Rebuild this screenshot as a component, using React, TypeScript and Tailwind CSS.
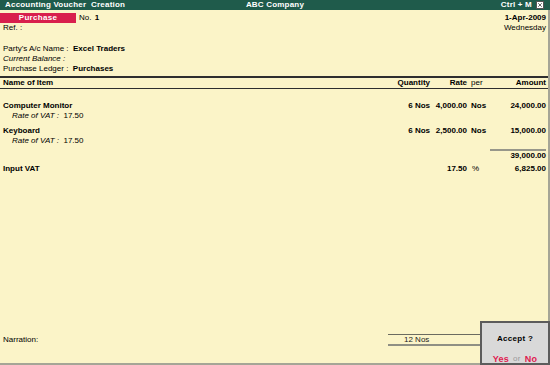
import { X } from "lucide-react";

type Line = {
    name: string;
    qty: string;
    rate: string;
    per: string;
    amount: string;
};

const items: Line[] = [
    { name: "Computer Monitor", qty: "6 Nos", rate: "4,000.00", per: "Nos", amount: "24,000.00" },
    { name: "Keyboard", qty: "6 Nos", rate: "2,500.00", per: "Nos", amount: "15,000.00" },
];

// name | quantity | rate | per | amount
const cols = "grid grid-cols-[1fr_50px_37px_23px_56px] pl-[3px] pr-[2px]";

export default function App() {
    return (
        <div className="relative w-[550px] h-[365px] overflow-hidden bg-white font-['Liberation_Sans',Arial,sans-serif] text-[8px] text-black">
            {/* title bar */}
            <div className="grid grid-cols-3 items-center h-[10px] bg-[#1f5b4b] px-[5px] text-white font-bold leading-[10px] tracking-[0.2px]">
                <span>Accounting Voucher&nbsp; Creation</span>
                <span className="text-center">ABC Company</span>
                <span className="flex items-center justify-end gap-[4px] pr-[1px]">
                    Ctrl + M
                    <span className="flex items-center justify-center w-[8px] h-[8px] bg-white border border-[#555]">
                        <X size={6} strokeWidth={3} color="#333" />
                    </span>
                </span>
            </div>

            <div className="flex flex-col h-[355px] w-[550px] bg-[#fbf4c8] border-r-2 border-b-2 border-[#a5a596]">
                {/* voucher header */}
                <div className="flex justify-between pr-[2px] mt-[3px]">
                    <div className="flex flex-col">
                        <div className="flex items-center h-[10px]">
                            <span className="flex items-center justify-center w-[76px] h-[10px] bg-[#d81f4d] text-white font-bold tracking-[0.3px]">
                                Purchase
                            </span>
                            <span className="ml-[3px]">
                                No. <b className="ml-[1px]">1</b>
                            </span>
                        </div>
                        <span className="pl-[3px] leading-[10px]">Ref. :</span>
                    </div>
                    <div className="flex flex-col items-end">
                        <span className="font-bold leading-[10px]">1-Apr-2009</span>
                        <span className="leading-[10px]">Wednesday</span>
                    </div>
                </div>

                <div className="flex flex-col pl-[3px] mt-[11px] leading-[10px]">
                    <span>
                        Party's A/c Name :&nbsp; <b>Excel Traders</b>
                    </span>
                    <span className="italic">Current Balance :</span>
                    <span>
                        Purchase Ledger :&nbsp; <b>Purchases</b>
                    </span>
                </div>

                {/* column headings */}
                <div className="mt-[2px] border-t-2 border-b border-[#2e2e2e]">
                    <div className={`${cols} leading-[10px] font-bold`}>
                        <span>Name of Item</span>
                        <span className="text-right">Quantity</span>
                        <span className="text-right">Rate</span>
                        <span className="pl-[4px] font-normal">per</span>
                        <span className="text-right">Amount</span>
                    </div>
                </div>

                {/* items */}
                <div className="flex flex-col gap-[5px] mt-[12px]">
                    {items.map((it) => (
                        <div key={it.name} className="flex flex-col leading-[10px]">
                            <div className={`${cols} font-bold`}>
                                <span>{it.name}</span>
                                <span className="text-right">{it.qty}</span>
                                <span className="text-right">{it.rate}</span>
                                <span className="pl-[4px]">{it.per}</span>
                                <span className="text-right">{it.amount}</span>
                            </div>
                            <div className="pl-[12px]">
                                <i>Rate of VAT :</i>&nbsp; 17.50
                            </div>
                        </div>
                    ))}
                </div>

                {/* subtotal */}
                <div className={`${cols} mt-[3px]`}>
                    <span className="col-start-5 h-[2px] bg-[#97978a]" />
                </div>
                <div className={`${cols} leading-[9px] font-bold`}>
                    <span className="col-start-5 text-right">39,000.00</span>
                </div>

                <div className={`${cols} mt-[4px] leading-[10px] font-bold`}>
                    <span>Input VAT</span>
                    <span />
                    <span className="text-right">17.50</span>
                    <span className="pl-[5px] font-normal">%</span>
                    <span className="text-right">6,825.00</span>
                </div>

                {/* narration */}
                <div className="flex items-center mt-auto mb-[17px] pl-[3px]">
                    <span className="w-[385px]">Narration:</span>
                    <div className="flex items-center w-[92px] h-[12px] border-t border-b-2 border-t-[#6b6b60] border-b-[#8f8f84] pl-[16px] text-[#222]">
                        12 Nos
                    </div>
                </div>
            </div>

            {/* accept dialog */}
            <div className="absolute right-0 bottom-0 w-[70px] h-[44px] flex flex-col items-center bg-[#d9d9d9] border-2 border-[#5c5c5c] font-bold">
                <span className="mt-[11px] leading-[10px] tracking-[0.3px]">Accept ?</span>
                <span className="flex gap-[4px] mt-[10px] leading-[10px] text-[9px] tracking-[0.3px]">
                    <span className="text-[#e0204f]">Yes</span>
                    <span className="font-normal text-[8px] text-[#9a9a9a]">or</span>
                    <span className="text-[#e0204f]">No</span>
                </span>
            </div>
        </div>
    );
}
